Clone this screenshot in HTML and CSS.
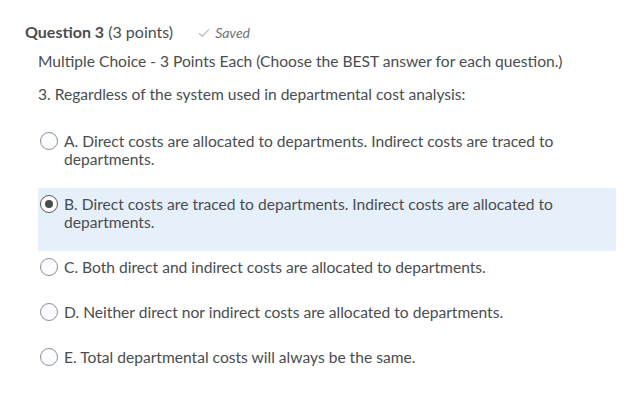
FILE: index.html
```html
<!DOCTYPE html>
<html>
<head>
<meta charset="utf-8">
<link rel="stylesheet" href="styles.css">
</head>
<body>
<div class="question">
  <div class="q-head">
    <span class="q-title"><strong>Question 3</strong> (3 points)</span>
    <span class="saved">
      <svg class="check" width="12" height="10" viewBox="0 0 12 10"><path d="M1 5.2 L4.3 8.4 L11 1.4" fill="none" stroke="#b7bbbe" stroke-width="1.3"/></svg>
      <em>Saved</em>
    </span>
  </div>
  <div class="q-body">
    <p class="instr">Multiple Choice - 3 Points Each (Choose the BEST answer for each question.)</p>
    <p class="prompt">3. Regardless of the system used in departmental cost analysis:</p>
    <div class="options">
      <label class="opt"><span class="radio"></span><span class="opt-text">A. Direct costs are allocated to departments. Indirect costs are traced to departments.</span></label>
      <label class="opt selected"><span class="radio checked"></span><span class="opt-text">B. Direct costs are traced to departments. Indirect costs are allocated to departments.</span></label>
      <label class="opt"><span class="radio"></span><span class="opt-text">C. Both direct and indirect costs are allocated to departments.</span></label>
      <label class="opt"><span class="radio"></span><span class="opt-text">D. Neither direct nor indirect costs are allocated to departments.</span></label>
      <label class="opt"><span class="radio"></span><span class="opt-text">E. Total departmental costs will always be the same.</span></label>
    </div>
  </div>
</div>
</body>
</html>
```

FILE: styles.css
```css
html, body {
  margin: 0;
  padding: 0;
  background: #ffffff;
}
body {
  font-family: Lato, "Open Sans", sans-serif;
  color: #4a4d50;
  font-size: 15.6px;
}
.question {
  padding: 23px 23px 0 25px;
}
.q-head {
  display: flex;
  align-items: baseline;
  gap: 25px;
  line-height: 18px;
  font-size: 16px;
}
.q-title strong {
  font-weight: 700;
}
.saved {
  color: #6e7376;
  font-size: 14px;
  display: inline-flex;
  align-items: baseline;
  gap: 5px;
}
.check {
  align-self: center;
}
.q-body {
  padding-left: 13px;
}
.instr {
  margin: 10px 0 0;
  line-height: 18px;
}
.prompt {
  margin: 15px 0 0;
  line-height: 18px;
}
.options {
  margin-top: 22px;
}
.opt {
  display: flex;
  align-items: flex-start;
  gap: 6px;
  padding: 7px 40px 20px 2px;
  line-height: 18px;
}
.opt.selected {
  background: #e6f0fa;
}
.radio {
  flex: none;
  width: 18px;
  height: 18px;
  border: 1px solid #8c9194;
  border-radius: 50%;
  box-sizing: border-box;
  background: #fbfcff;
  display: flex;
  align-items: center;
  justify-content: center;
}
.radio.checked {
  border-color: #565a5c;
  background: #ffffff;
}
.radio.checked::after {
  content: "";
  width: 8px;
  height: 8px;
  border-radius: 50%;
  background: #494c4e;
}
```
